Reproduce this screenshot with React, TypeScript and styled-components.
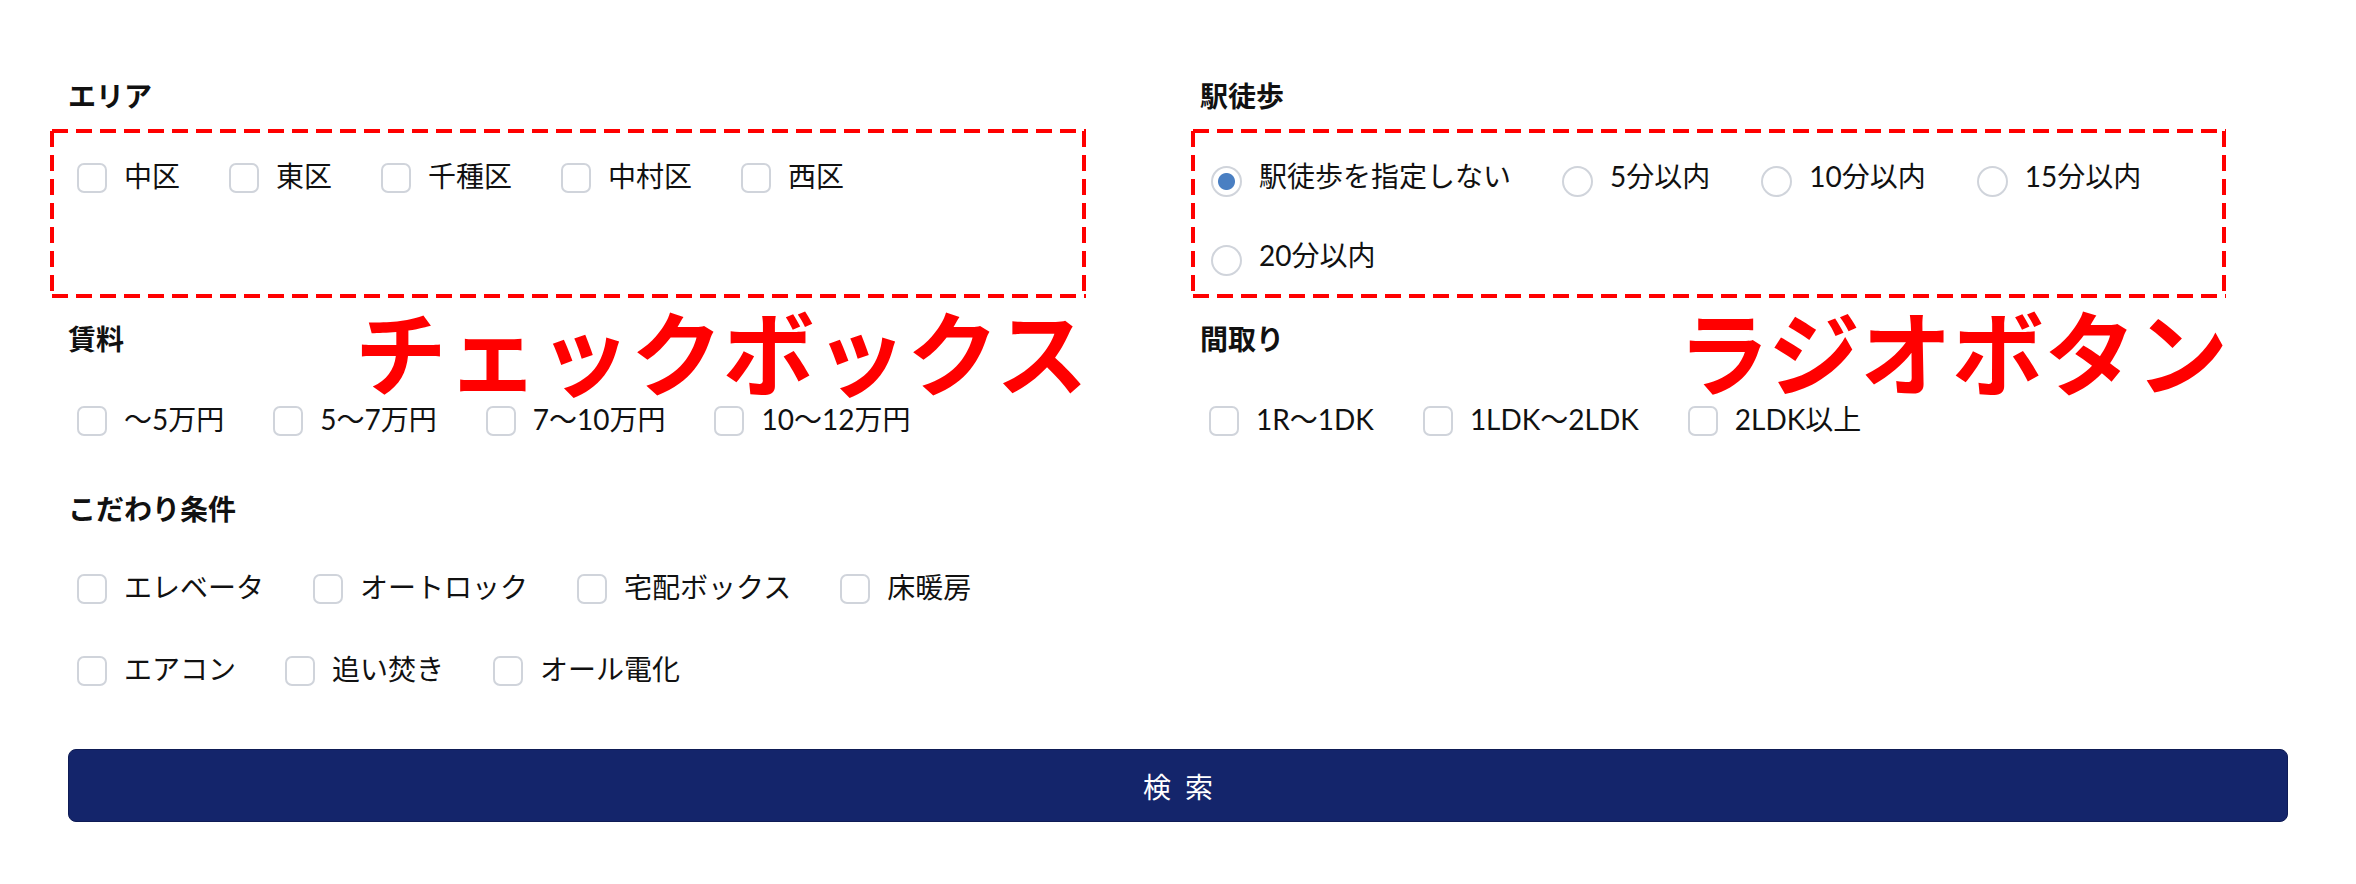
import React from "react";
import styled, { createGlobalStyle } from "styled-components";

const GlobalStyle = createGlobalStyle`
  html, body { margin: 0; padding: 0; background: #ffffff; }
  body {
    font-family: Lato, "Noto Sans CJK JP", sans-serif;
    color: #111111;
  }
`;

const Form = styled.form`
  width: 2356px;
  box-sizing: border-box;
  padding: 76px 68px 61px;
`;

const Grid = styled.div`
  display: grid;
  grid-template-columns: 1fr 1fr;
  column-gap: 44px;
  row-gap: 44px;
`;

const Section = styled.section<{ $mt?: number }>`
  position: relative;
  margin-top: ${(p) => p.$mt ?? 0}px;
`;

const Title = styled.h3`
  margin: 0;
  font-family: Lato, "Noto Sans CJK JP", sans-serif;
  font-size: 28px;
  line-height: 40px;
  font-weight: 700;
  color: #111111;
`;

const Options = styled.div<{ $mt: number; $rowGap: number }>`
  display: flex;
  flex-wrap: wrap;
  margin-top: ${(p) => p.$mt}px;
  row-gap: ${(p) => p.$rowGap}px;
`;

const Item = styled.label`
  display: flex;
  align-items: center;
  height: 40px;
  margin-right: 40px;
  cursor: pointer;
`;

const Checkbox = styled.input.attrs({ type: "checkbox" })`
  appearance: none;
  box-sizing: border-box;
  width: 30px;
  height: 30px;
  margin: 4px 0 0 9px;
  border: 2px solid #d0d4db;
  border-radius: 7px;
  background: #ffffff;
  flex: none;
`;

const Radio = styled.input.attrs({ type: "radio" })`
  appearance: none;
  box-sizing: border-box;
  width: 31px;
  height: 31px;
  margin: 10px 0 0 11px;
  border: 2px solid #d0d4db;
  border-radius: 50%;
  background: #ffffff;
  flex: none;
  &:checked {
    background: radial-gradient(circle, #4a7fc2 0 8px, #ffffff 9px);
  }
`;

const LabelText = styled.span`
  margin-left: 17px;
  font-size: 28px;
  line-height: 40px;
  white-space: nowrap;
  color: #111111;
`;

const dash = (dir: string) =>
  `repeating-linear-gradient(${dir}, #ff0000 0 16px, transparent 16px 24px)`;

const DashedFrame = styled.div<{ $left: number; $width: number }>`
  position: absolute;
  top: 53px;
  left: ${(p) => p.$left}px;
  width: ${(p) => p.$width}px;
  height: 169px;
  pointer-events: none;
  background:
    ${dash("90deg")} 2px 0 / 100% 4px no-repeat,
    ${dash("90deg")} 2px 100% / 100% 4px no-repeat,
    ${dash("180deg")} 0 2px / 4px 100% no-repeat,
    ${dash("180deg")} 100% 2px / 4px 100% no-repeat;
`;

const Callout = styled.div`
  position: absolute;
  top: calc(100% + 5px);
  right: -2px;
  font-family: "Noto Sans CJK JP", sans-serif;
  font-size: 92px;
  line-height: 1;
  font-weight: 700;
  color: #ff0000;
  white-space: nowrap;
`;

const SearchButton = styled.button`
  display: block;
  width: 100%;
  height: 73px;
  margin-top: 60px;
  padding: 0 0 0 14px;
  border: 1px solid #0e1b55;
  border-radius: 8px;
  background: #14256b;
  color: #ffffff;
  font-family: Lato, "Noto Sans CJK JP", sans-serif;
  font-size: 28px;
  letter-spacing: 14px;
  cursor: pointer;
`;

type Opt = { label: string; checked?: boolean };

function CheckGroup({ name, items, mt, rowGap }: { name: string; items: string[]; mt: number; rowGap: number }) {
  return (
    <Options $mt={mt} $rowGap={rowGap}>
      {items.map((t) => (
        <Item key={t}>
          <Checkbox name={name} value={t} />
          <LabelText>{t}</LabelText>
        </Item>
      ))}
    </Options>
  );
}

function RadioGroup({ name, items, mt, rowGap }: { name: string; items: Opt[]; mt: number; rowGap: number }) {
  return (
    <Options $mt={mt} $rowGap={rowGap}>
      {items.map((o) => (
        <Item key={o.label}>
          <Radio name={name} value={o.label} defaultChecked={o.checked} />
          <LabelText>{o.label}</LabelText>
        </Item>
      ))}
    </Options>
  );
}

export default function App() {
  return (
    <>
      <GlobalStyle />
      <Form onSubmit={(e) => e.preventDefault()}>
        <Grid>
          <Section>
            <Title>エリア</Title>
            <CheckGroup name="area" items={["中区", "東区", "千種区", "中村区", "西区"]} mt={40} rowGap={42} />
            <DashedFrame $left={-18} $width={1036}>
              <Callout>チェックボックス</Callout>
            </DashedFrame>
          </Section>
          <Section>
            <Title>駅徒歩</Title>
            <RadioGroup
              name="walk"
              items={[
                { label: "駅徒歩を指定しない", checked: true },
                { label: "5分以内" },
                { label: "10分以内" },
                { label: "15分以内" },
                { label: "20分以内" },
              ]}
              mt={40}
              rowGap={39}
            />
            <DashedFrame $left={-9} $width={1035}>
              <Callout>ラジオボタン</Callout>
            </DashedFrame>
          </Section>
          <Section>
            <Title>賃料</Title>
            <CheckGroup name="rent" items={["〜5万円", "5〜7万円", "7〜10万円", "10〜12万円"]} mt={40} rowGap={42} />
          </Section>
          <Section>
            <Title>間取り</Title>
            <CheckGroup name="layout" items={["1R〜1DK", "1LDK〜2LDK", "2LDK以上"]} mt={40} rowGap={42} />
          </Section>
          <Section $mt={6}>
            <Title>こだわり条件</Title>
            <CheckGroup
              name="feature"
              items={["エレベータ", "オートロック", "宅配ボックス", "床暖房", "エアコン", "追い焚き", "オール電化"]}
              mt={38}
              rowGap={42}
            />
          </Section>
        </Grid>
        <SearchButton type="submit">検索</SearchButton>
      </Form>
    </>
  );
}
